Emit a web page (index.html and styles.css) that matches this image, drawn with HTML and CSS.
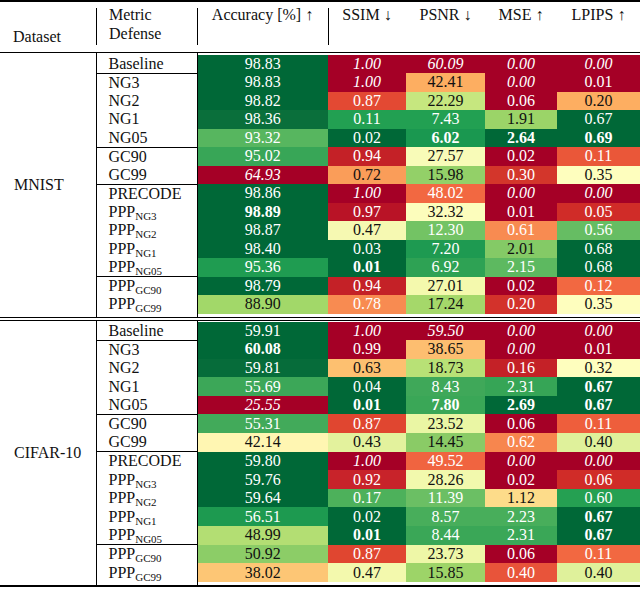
FILE: index.html
```html
<!DOCTYPE html>
<html>
<head>
<meta charset="utf-8">
<link rel="stylesheet" href="styles.css">
</head>
<body>
<table class="tbl">
<colgroup>
<col class="c-ds"><col class="c-md"><col class="c-acc"><col class="c-ssim"><col class="c-psnr"><col class="c-mse"><col class="c-lp">
</colgroup>
<thead>
<tr>
<th class="h-ds">Dataset</th>
<th class="h-md vl">Metric<br>Defense</th>
<th class="h-c vl">Accuracy [%] ↑</th>
<th class="h-c vl">SSIM ↓</th>
<th class="h-c">PSNR ↓</th>
<th class="h-c">MSE ↑</th>
<th class="h-c">LPIPS ↑</th>
</tr>
</thead>
<tbody class="grp">
<tr class="gap top"><td class="ds" rowspan="16">MNIST</td><td class="m"></td><td colspan="5"></td></tr>
<tr><td class="m sep">Baseline</td><td class="w" style="background:#006837">98.83</td><td class="w i" style="background:#a50026">1.00</td><td class="w i" style="background:#a50026">60.09</td><td class="w i" style="background:#a50026">0.00</td><td class="w i" style="background:#a50026">0.00</td></tr>
<tr><td class="m">NG3</td><td class="w" style="background:#006837">98.83</td><td class="w i" style="background:#a50026">1.00</td><td class="k" style="background:#fdae61">42.41</td><td class="w i" style="background:#a50026">0.00</td><td class="w" style="background:#a50026">0.01</td></tr>
<tr><td class="m">NG2</td><td class="w" style="background:#006837">98.82</td><td class="w" style="background:#e34933">0.87</td><td class="k" style="background:#c6e77f">22.29</td><td class="w" style="background:#a50026">0.06</td><td class="k" style="background:#fdae61">0.20</td></tr>
<tr><td class="m">NG1</td><td class="w" style="background:#0a6f3b">98.36</td><td class="w" style="background:#22a052">0.11</td><td class="w" style="background:#22a052">7.43</td><td class="k" style="background:#9bd468">1.91</td><td class="w" style="background:#006837">0.67</td></tr>
<tr><td class="m sep">NG05</td><td class="w" style="background:#57b65f">93.32</td><td class="w" style="background:#006837">0.02</td><td class="w b" style="background:#1a9850">6.02</td><td class="w b" style="background:#006837">2.64</td><td class="w b" style="background:#006837">0.69</td></tr>
<tr><td class="m">GC90</td><td class="w" style="background:#38a657">95.02</td><td class="w" style="background:#c42127">0.94</td><td class="k" style="background:#f8fbb8">27.57</td><td class="w" style="background:#a50026">0.02</td><td class="w" style="background:#ea5739">0.11</td></tr>
<tr><td class="m sep">GC99</td><td class="w i" style="background:#a50026">64.93</td><td class="k" style="background:#fa9d59">0.72</td><td class="k" style="background:#93d068">15.98</td><td class="w" style="background:#d3362b">0.30</td><td class="k" style="background:#fefebe">0.35</td></tr>
<tr><td class="m">PRECODE</td><td class="w" style="background:#006837">98.86</td><td class="w i" style="background:#a50026">1.00</td><td class="w" style="background:#f26841">48.02</td><td class="w i" style="background:#a50026">0.00</td><td class="w i" style="background:#a50026">0.00</td></tr>
<tr><td class="m">PPP<sub>NG3</sub></td><td class="w b" style="background:#006837">98.89</td><td class="w" style="background:#b91326">0.97</td><td class="k" style="background:#fcfdbc">32.32</td><td class="w" style="background:#a50026">0.01</td><td class="w" style="background:#d02c28">0.05</td></tr>
<tr><td class="m">PPP<sub>NG2</sub></td><td class="w" style="background:#006837">98.87</td><td class="k" style="background:#f6f9b2">0.47</td><td class="w" style="background:#73c364">12.30</td><td class="w" style="background:#f88b51">0.61</td><td class="w" style="background:#66bd63">0.56</td></tr>
<tr><td class="m">PPP<sub>NG1</sub></td><td class="w" style="background:#006837">98.40</td><td class="w" style="background:#006837">0.03</td><td class="w" style="background:#1e9a51">7.20</td><td class="k" style="background:#84ca66">2.01</td><td class="w" style="background:#006837">0.68</td></tr>
<tr><td class="m sep">PPP<sub>NG05</sub></td><td class="w" style="background:#1f9c51">95.36</td><td class="w b" style="background:#006837">0.01</td><td class="w" style="background:#2ea254">6.92</td><td class="w" style="background:#5db960">2.15</td><td class="w" style="background:#006837">0.68</td></tr>
<tr><td class="m">PPP<sub>GC90</sub></td><td class="w" style="background:#006837">98.79</td><td class="w" style="background:#c42127">0.94</td><td class="k" style="background:#f4f9ad">27.01</td><td class="w" style="background:#a50026">0.02</td><td class="w" style="background:#f26841">0.12</td></tr>
<tr><td class="m">PPP<sub>GC99</sub></td><td class="k" style="background:#a2d869">88.90</td><td class="w" style="background:#f88b51">0.78</td><td class="k" style="background:#a5d86a">17.24</td><td class="w" style="background:#d3322b">0.20</td><td class="k" style="background:#fefebe">0.35</td></tr>
<tr class="gap bot"><td class="m"></td><td colspan="5"></td></tr>
</tbody>
<tbody class="grp grp2">
<tr class="gap top"><td class="ds" rowspan="16">CIFAR-10</td><td class="m"></td><td colspan="5"></td></tr>
<tr><td class="m sep">Baseline</td><td class="w" style="background:#006837">59.91</td><td class="w i" style="background:#a50026">1.00</td><td class="w i" style="background:#a50026">59.50</td><td class="w i" style="background:#a50026">0.00</td><td class="w i" style="background:#a50026">0.00</td></tr>
<tr><td class="m">NG3</td><td class="w b" style="background:#006837">60.08</td><td class="w" style="background:#a50026">0.99</td><td class="k" style="background:#fdbe70">38.65</td><td class="w i" style="background:#a50026">0.00</td><td class="w" style="background:#a50026">0.01</td></tr>
<tr><td class="m">NG2</td><td class="w" style="background:#066c3a">59.81</td><td class="k" style="background:#fdc070">0.63</td><td class="k" style="background:#b8e176">18.73</td><td class="w" style="background:#c42127">0.16</td><td class="k" style="background:#fefebe">0.32</td></tr>
<tr><td class="m">NG1</td><td class="w" style="background:#3ca758">55.69</td><td class="w" style="background:#006837">0.04</td><td class="w" style="background:#3fa859">8.43</td><td class="w" style="background:#36a556">2.31</td><td class="w b" style="background:#006837">0.67</td></tr>
<tr><td class="m sep">NG05</td><td class="w i" style="background:#a50026">25.55</td><td class="w b" style="background:#006837">0.01</td><td class="w b" style="background:#3aa757">7.80</td><td class="w b" style="background:#006837">2.69</td><td class="w b" style="background:#006837">0.67</td></tr>
<tr><td class="m">GC90</td><td class="w" style="background:#42aa5a">55.31</td><td class="w" style="background:#e04630">0.87</td><td class="k" style="background:#eaf6a4">23.52</td><td class="w" style="background:#a50026">0.06</td><td class="w" style="background:#ee5e3c">0.11</td></tr>
<tr><td class="m sep">GC99</td><td class="k" style="background:#fff6b2">42.14</td><td class="k" style="background:#e3f29d">0.43</td><td class="k" style="background:#8acb66">14.45</td><td class="w" style="background:#f7864e">0.62</td><td class="k" style="background:#dff19b">0.40</td></tr>
<tr><td class="m">PRECODE</td><td class="w" style="background:#006837">59.80</td><td class="w i" style="background:#a50026">1.00</td><td class="w" style="background:#f06440">49.52</td><td class="w i" style="background:#a50026">0.00</td><td class="w i" style="background:#a50026">0.00</td></tr>
<tr><td class="m">PPP<sub>NG3</sub></td><td class="w" style="background:#006837">59.76</td><td class="w" style="background:#c8232a">0.92</td><td class="k" style="background:#f2f9ad">28.26</td><td class="w" style="background:#a50026">0.02</td><td class="w" style="background:#d02c28">0.06</td></tr>
<tr><td class="m">PPP<sub>NG2</sub></td><td class="w" style="background:#006837">59.64</td><td class="w" style="background:#4db15b">0.17</td><td class="w" style="background:#6bbf64">11.39</td><td class="k" style="background:#fddc8a">1.12</td><td class="w" style="background:#25a052">0.60</td></tr>
<tr><td class="m">PPP<sub>NG1</sub></td><td class="w" style="background:#1d9a50">56.51</td><td class="w" style="background:#006837">0.02</td><td class="w" style="background:#48ae5b">8.57</td><td class="w" style="background:#48ae5b">2.23</td><td class="w b" style="background:#006837">0.67</td></tr>
<tr><td class="m sep">PPP<sub>NG05</sub></td><td class="k" style="background:#b3de73">48.99</td><td class="w b" style="background:#006837">0.01</td><td class="w" style="background:#3aa757">8.44</td><td class="w" style="background:#3aa757">2.31</td><td class="w b" style="background:#006837">0.67</td></tr>
<tr><td class="m">PPP<sub>GC90</sub></td><td class="k" style="background:#8ccd67">50.92</td><td class="w" style="background:#e04630">0.87</td><td class="k" style="background:#eef7a7">23.73</td><td class="w" style="background:#a50026">0.06</td><td class="w" style="background:#f26841">0.11</td></tr>
<tr><td class="m">PPP<sub>GC99</sub></td><td class="k" style="background:#fdc675">38.02</td><td class="k" style="background:#f3f9ad">0.47</td><td class="k" style="background:#9dd468">15.85</td><td class="w" style="background:#e8543a">0.40</td><td class="k" style="background:#dff19b">0.40</td></tr>
<tr class="gap bot"><td class="m"></td><td colspan="5"></td></tr>
</tbody>
</table>
</body>
</html>
```
FILE: styles.css
```css
html, body {
  margin: 0;
  padding: 0;
  background: #fff;
}
body {
  font-family: "Liberation Serif", "Times New Roman", serif;
  font-size: 16px;
  color: #111;
}
.tbl {
  border-collapse: collapse;
  table-layout: fixed;
  width: 640px;
}
.c-ds { width: 96px; }
.c-md { width: 101px; }
.c-acc { width: 131px; }
.c-ssim { width: 78px; }
.c-psnr { width: 79px; }
.c-mse { width: 72px; }
.c-lp { width: 83px; }

thead tr {
  border-top: 2px solid #000;
  border-bottom: 1px solid #000;
}
th {
  font-weight: normal;
  padding: 3px 0 0 0;
  height: 44px;
  line-height: 19px;
  vertical-align: top;
  text-align: center;
}
th.vl {
  background: linear-gradient(#000, #000) no-repeat 0 6px / 1px 37px;
}
.h-ds {
  text-align: left;
  vertical-align: bottom;
  padding: 0 0 6px 13px;
}
.h-md {
  text-align: left;
  padding-left: 13px;
}

tbody tr { height: 18.5px; }
td {
  padding: 0;
  line-height: 16px;
  text-align: center;
  white-space: nowrap;
}
td.m {
  text-align: left;
  padding-left: 12px;
  border-left: 1px solid #000;
  border-right: 1px solid #000;
}
td.sep {
  border-bottom: 1px solid #000;
}
td.ds {
  text-align: left;
  padding-left: 14px;
  vertical-align: middle;
}
tbody tr.gap { height: 2px; }
tbody tr.gap.bot { height: 5px; }
tr.gap td { height: auto; line-height: 0; font-size: 0; }
tr.gap td.ds { font-size: 16px; line-height: 16px; }
.grp2 { border-top: 4px double #000; border-bottom: 2px solid #000; }
.grp2 tr.gap.top { height: 3px; }
.grp2 tr.gap.bot { height: 4px; }
.grp2 tr:not(.gap) { height: 18.6px; }

td.w { color: #fff; }
td.k { color: #111; }
td.i { font-style: italic; }
td.b { font-weight: bold; }
sub {
  font-size: 11px;
  line-height: 0;
  vertical-align: -3px;
}
```
